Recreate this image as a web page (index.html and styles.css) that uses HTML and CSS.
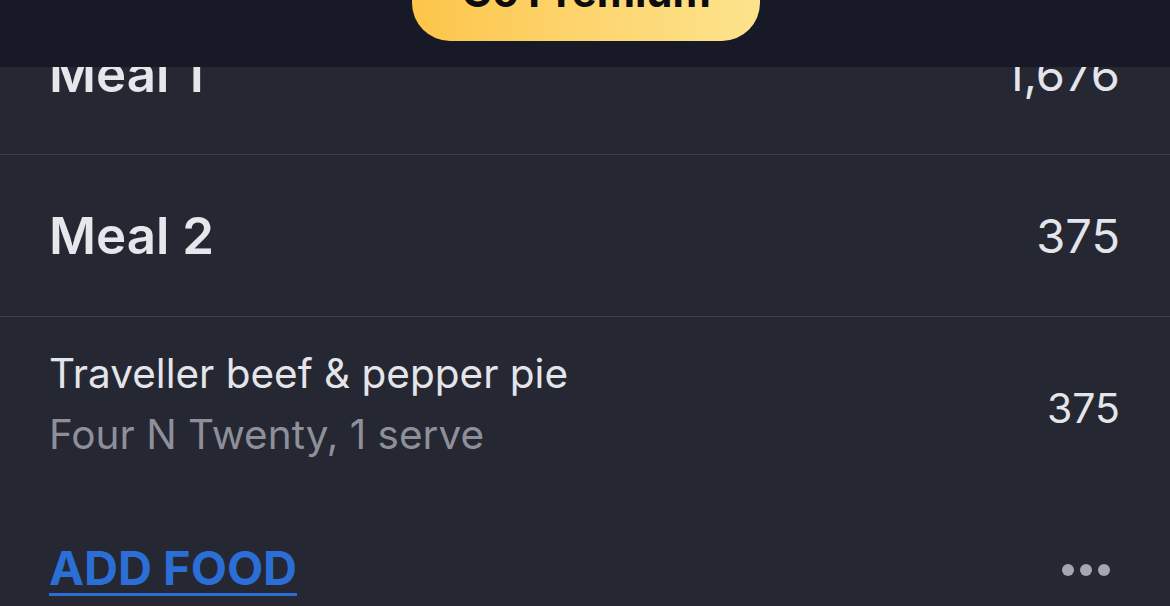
FILE: index.html
```html
<!DOCTYPE html>
<html lang="en">
<head>
    <meta charset="UTF-8">
    <meta name="viewport" content="width=device-width, initial-scale=1.0">
    <link rel="stylesheet" href="styles.css">
    <title>Diary</title>
</head>
<body>
    <div id="topbar">
        <button class="premium-btn">Go Premium</button>
    </div>

    <div id="diary">
        <div class="meal-row">
            <span class="meal-name">Meal 1</span>
            <span class="meal-total">1,676</span>
        </div>

        <div class="meal-row">
            <span class="meal-name">Meal 2</span>
            <span class="meal-total">375</span>
        </div>

        <div class="food-row">
            <div class="food-info">
                <div class="food-name">Traveller beef &amp; pepper pie</div>
                <div class="food-brand">Four N Twenty, 1 serve</div>
            </div>
            <span class="food-cals">375</span>
        </div>

        <div class="meal-footer">
            <a href="#" class="add-food">ADD FOOD</a>
            <div class="more-btn">
                <span class="dot"></span>
                <span class="dot"></span>
                <span class="dot"></span>
            </div>
        </div>
    </div>
</body>
</html>
```

FILE: styles.css
```css
body {
    margin: 0;
    background-color: #252733;
    font-family: 'Inter', 'Liberation Sans', sans-serif;
    color: #e4e5ea;
    overflow: hidden;
}

#topbar {
    position: sticky;
    top: 0;
    z-index: 2;
    height: 67px;
    background-color: #171a26;
    display: flex;
    justify-content: center;
    align-items: flex-start;
}

.premium-btn {
    margin-top: -38px;
    margin-left: 2px;
    width: 348px;
    padding: 0 0 19px;
    line-height: 60px;
    border: none;
    border-radius: 0 0 38px 38px;
    background: linear-gradient(90deg, #fdc549 0%, #fdd56f 50%, #fde38d 100%);
    color: #0c0c10;
    font-family: 'Inter', 'Liberation Sans', sans-serif;
    font-size: 42px;
    font-weight: 700;
    cursor: pointer;
}

#diary {
    margin-top: -74px;
}

.meal-row {
    height: 161px;
    padding: 0 50px 0 49px;
    display: flex;
    align-items: center;
    justify-content: space-between;
    border-bottom: 1px solid #3b3d48;
}

.meal-name {
    font-size: 51px;
    font-weight: 600;
    color: #e6e7eb;
}

.meal-total {
    font-size: 47px;
    color: #e4e5ea;
}

.food-row {
    padding: 26px 50px 0 49px;
    display: flex;
    align-items: center;
    justify-content: space-between;
}

.food-name {
    font-size: 40.5px;
    line-height: 61px;
    color: #e4e5ea;
}

.food-brand {
    font-size: 40.5px;
    line-height: 61px;
    color: #8d8f99;
}

.food-cals {
    margin-top: 8px;
    font-size: 41px;
    color: #e4e5ea;
}

.meal-footer {
    padding: 74px 50px 0 49px;
    display: flex;
    align-items: center;
    justify-content: space-between;
}

.add-food {
    font-size: 47px;
    font-weight: 700;
    color: #2b6fd6;
    text-decoration: underline;
    text-decoration-thickness: 4px;
    text-underline-offset: 8px;
}

.more-btn {
    display: flex;
    gap: 6px;
    margin-top: 4px;
    margin-right: 10px;
}

.dot {
    width: 12px;
    height: 12px;
    border-radius: 50%;
    background-color: #a4a7b1;
}
```
